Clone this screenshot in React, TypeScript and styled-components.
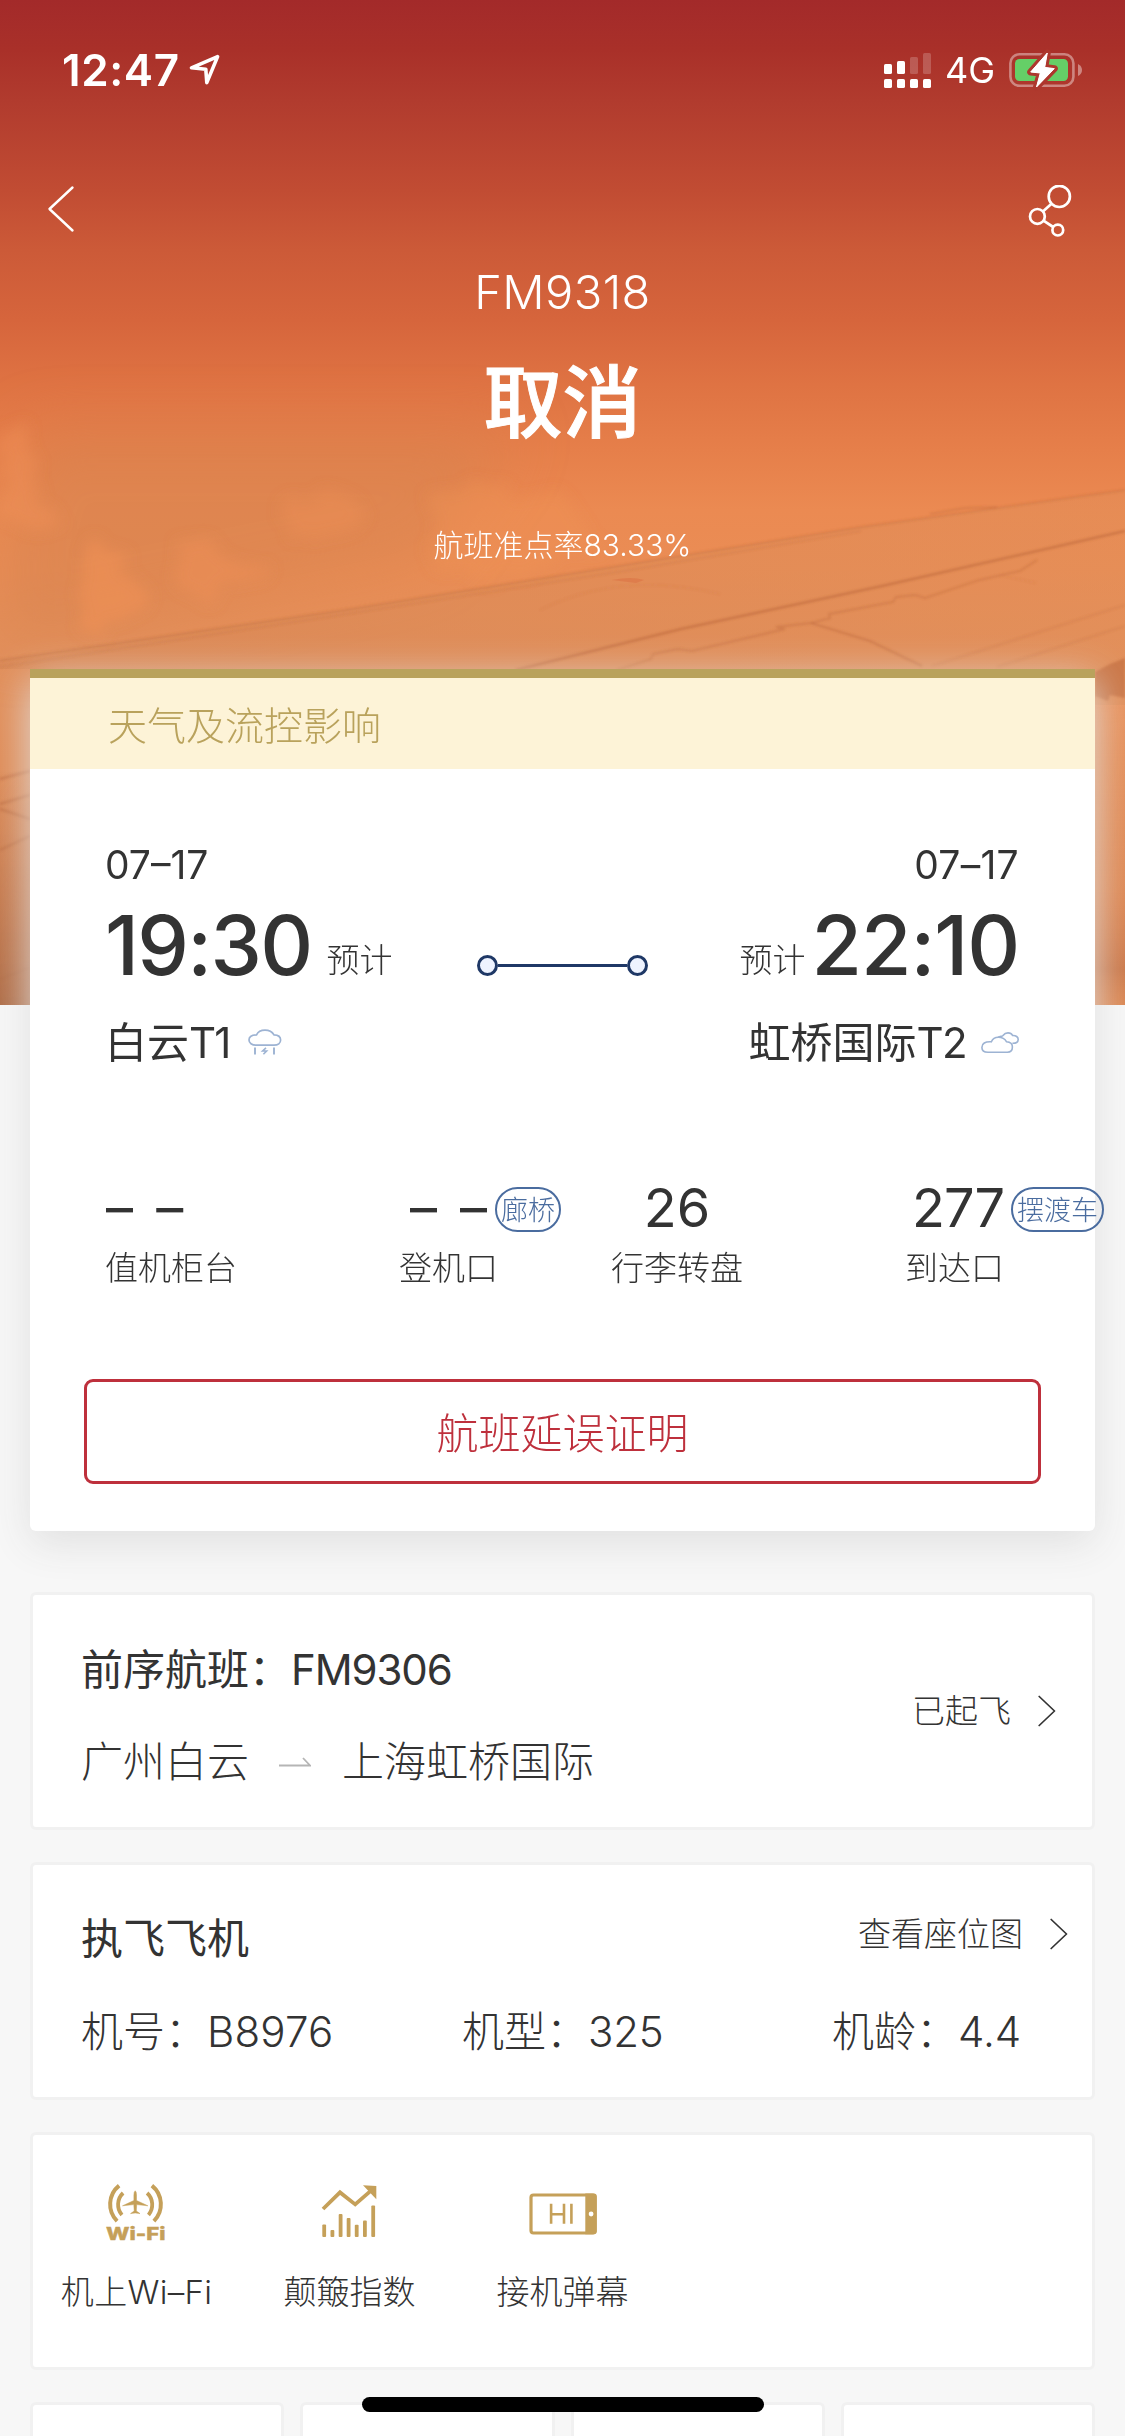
import React from "react";
import styled, { createGlobalStyle } from "styled-components";

const INK = "#333333";
const GOLD = "#c5a059";

const GlobalStyle = createGlobalStyle`
  * { box-sizing: border-box; }
  body {
    margin: 0;
    background: #f7f7f7;
    color: ${INK};
    font-family: Inter, "Noto Sans CJK SC", sans-serif;
  }
`;

const Page = styled.main`
  position: relative;
  width: 1125px;
  height: 2436px;
  overflow: hidden;
  background: #f7f7f7;
`;

const Text = styled.span<{ $size: number; $line?: number; $weight?: number; $spacing?: number; $color?: string }>`
  display: block;
  white-space: nowrap;
  font-size: ${(p) => p.$size}px;
  line-height: ${(p) => p.$line ?? 50}px;
  font-weight: ${(p) => p.$weight ?? 300};
  letter-spacing: ${(p) => p.$spacing ?? 0}px;
  color: ${(p) => p.$color ?? "inherit"};
`;

const Latin = styled.span<{ $spacing: number }>`
  letter-spacing: ${(p) => p.$spacing}px;
`;

/* ---------- hero ---------- */

const Hero = styled.header`
  position: relative;
  height: 1005px;
  color: #fff;
  background: linear-gradient(
    180deg,
    #a32a2a 0, #a93029 50px, #b13b2e 100px, #c14c33 190px, #cc5a38 250px,
    #d6653c 320px, #df7343 385px, #e67f4a 450px, #eb8a52 510px, #ea8d55 570px,
    #e2905c 660px, #df8c57 760px, #db8350 1005px
  );
`;

const HeroArt = styled.svg`
  position: absolute;
  inset: 0;
  width: 1125px;
  height: 1005px;
`;

const HeroContent = styled.div`
  position: relative;
  display: flex;
  flex-direction: column;
`;

const StatusBar = styled.div`
  display: flex;
  align-items: center;
  justify-content: space-between;
  height: 140px;
  padding: 0 41px 0 62px;
`;

const StatusGroup = styled.div<{ $gap: number }>`
  display: flex;
  align-items: center;
  gap: ${(p) => p.$gap}px;
`;

const NavBar = styled.nav`
  display: flex;
  align-items: flex-start;
  justify-content: space-between;
  height: 121px;
  padding: 45px 52px 0 47px;
`;

const FlightHeading = styled.div`
  display: flex;
  flex-direction: column;
  align-items: center;
  padding-top: 1px;
`;

const Headline = styled.h1`
  margin: 31px 0 72px;
  font-size: 79px;
  font-weight: 500;
  line-height: 100px;
  -webkit-text-stroke: 1px #fff;
`;

/* ---------- main card ---------- */

const DetailCard = styled.section`
  position: relative;
  width: 1065px;
  height: 862px;
  margin: -336px 30px 0;
  background: #fff;
  border-top: 9px solid #b9a25c;
  border-radius: 0 0 6px 6px;
  box-shadow: 0 12px 42px #e0e0e0;
`;

const Notice = styled.div`
  display: flex;
  align-items: center;
  height: 91px;
  padding: 4px 78px 0;
  background: #fdf3d7;
`;

const Route = styled.div`
  display: flex;
  justify-content: space-between;
  padding: 71px 76px 0 75px;
`;

const Endpoint = styled.div<{ $end?: boolean }>`
  display: flex;
  flex-direction: column;
  align-items: ${(p) => (p.$end ? "flex-end" : "flex-start")};
  width: 300px;
`;

const TimeRow = styled.div<{ $gap: number }>`
  display: flex;
  align-items: flex-start;
  gap: ${(p) => p.$gap}px;
  height: 90px;
  margin: 11px 0 27px;
`;

const Estimate = styled(Text)`
  padding-top: 34px;
`;

const AirportRow = styled.div<{ $gap: number }>`
  display: flex;
  align-items: center;
  gap: ${(p) => p.$gap}px;
`;

const Track = styled.div`
  display: flex;
  align-items: center;
  align-self: flex-start;
  width: 171px;
  margin-top: 115px;
`;

const Stop = styled.i`
  width: 21px;
  height: 21px;
  border: 3px solid #1f3866;
  border-radius: 50%;
  background: #eef3ff;
`;

const Rail = styled.i`
  flex: 1;
  height: 3px;
  background: #1f3866;
`;

const Stats = styled.div`
  display: grid;
  grid-template-columns: 294px 212px 294px 1fr;
  margin-top: 110px;
  padding-left: 75px;
`;

const Stat = styled.div<{ $align?: string }>`
  display: flex;
  flex-direction: column;
  align-items: ${(p) => p.$align ?? "center"};
  justify-self: start;
  gap: 8px;
`;

const StatValue = styled.div<{ $shift?: number }>`
  position: relative;
  height: 60px;
  margin-left: ${(p) => p.$shift ?? 0}px;
  word-spacing: 8px;
`;

const Badge = styled.span<{ $gap: number }>`
  position: absolute;
  left: calc(100% + ${(p) => p.$gap}px);
  top: 9px;
  height: 45px;
  padding: 0 4px;
  border: 2px solid #4a6c9f;
  border-radius: 23px;
  color: #4a6c9f;
  font-size: 27px;
  font-weight: 300;
  line-height: 43px;
  white-space: nowrap;
`;

const ProofButton = styled.button`
  display: block;
  width: 957px;
  height: 105px;
  margin: 89px auto 0;
  padding: 4px 0 0;
  border: 3px solid #be303c;
  border-radius: 9px;
  background: #fff;
  color: #be303c;
  font: 300 42px/95px Inter, "Noto Sans CJK SC", sans-serif;
`;

/* ---------- lower panels ---------- */

const Panels = styled.div`
  display: flex;
  flex-direction: column;
  gap: 32px;
  margin: 61px 30px 0;
`;

const Panel = styled.section`
  height: 238px;
  background: #fff;
  border: 3px solid #f1f1f1;
  border-radius: 6px;
`;

const PreviousFlight = styled(Panel)`
  display: flex;
  align-items: center;
  justify-content: space-between;
  padding: 0 36px 0 48px;
`;

const Stack = styled.div`
  display: flex;
  flex-direction: column;
  gap: 42px;
  padding-top: 9px;
`;

const Legs = styled.div`
  display: flex;
  align-items: center;
`;

const LegArrow = styled.svg`
  width: 32px;
  height: 10px;
  margin: 0 31px 0 30px;
`;

const MoreLink = styled.div<{ $top?: number }>`
  display: flex;
  align-items: center;
  gap: 27px;
  margin-top: ${(p) => p.$top ?? 0}px;
`;

const Aircraft = styled(Panel)`
  display: flex;
  flex-direction: column;
  padding: 49px 24px 0 48px;
`;

const AircraftHead = styled.div`
  display: flex;
  justify-content: space-between;
  align-items: flex-start;
  height: 93px;
`;

const AircraftFacts = styled.div`
  display: grid;
  grid-template-columns: 381px 370px 1fr;
`;

const Services = styled(Panel)`
  display: grid;
  grid-template-columns: 207px 219px 207px;
`;

const Service = styled.div`
  display: flex;
  flex-direction: column;
  align-items: center;
  padding-top: 44px;
  gap: 24px;

  svg { display: block; width: 76px; height: 64px; }
`;

const TileRow = styled.div`
  display: grid;
  grid-template-columns: repeat(4, 1fr);
  gap: 16px;
`;

const HomeIndicator = styled.div`
  position: absolute;
  left: 362px;
  bottom: 24px;
  width: 402px;
  height: 15px;
  border-radius: 8px;
  background: #000;
`;

/* ---------- drawings ---------- */

const WingScene = () => (
  <HeroArt viewBox="0 0 1125 1005">
    <defs>
      <filter id="cloud" x="-30%" y="-30%" width="160%" height="160%">
        <feTurbulence type="fractalNoise" baseFrequency="0.022 0.03" numOctaves="3" seed="8" />
        <feDisplacementMap in="SourceGraphic" scale="40" xChannelSelector="R" yChannelSelector="G" />
        <feGaussianBlur stdDeviation="7" />
      </filter>
      <filter id="haze" x="-30%" y="-30%" width="160%" height="160%">
        <feGaussianBlur stdDeviation="30" />
      </filter>
      <filter id="thin">
        <feGaussianBlur stdDeviation="0.9" />
      </filter>
      <linearGradient id="leftEdge" x1="0" y1="0" x2="0" y2="1">
        <stop offset="0" stopColor="#b06c45" stopOpacity="0" />
        <stop offset="1" stopColor="#ab6943" stopOpacity="0.95" />
      </linearGradient>
      <linearGradient id="rightEdge" x1="0" y1="0" x2="0" y2="1">
        <stop offset="0" stopColor="#ee955f" stopOpacity="0.5" />
        <stop offset="0.6" stopColor="#e08a55" stopOpacity="0.3" />
        <stop offset="0.88" stopColor="#b8683d" stopOpacity="0.5" />
        <stop offset="1" stopColor="#d98850" stopOpacity="0.4" />
      </linearGradient>
      <linearGradient id="wing" x1="0" y1="0" x2="1" y2="0">
        <stop offset="0" stopColor="#d88755" stopOpacity="0.7" />
        <stop offset="1" stopColor="#e08f5a" stopOpacity="0.4" />
      </linearGradient>
    </defs>
    <path d="M30 430 H520 L430 560 L0 650 V540Z" fill="#d4824f" opacity="0.5" filter="url(#haze)" />
    <path d="M0 660 L344 610 L624 565 L861 527 L1125 490 V669 H0Z" fill="url(#wing)" />
    <g filter="url(#cloud)" fill="#f09156">
      <path d="M0 430 L28 430 L36 490 L56 530 L26 530 L0 515Z" opacity="0.45" />
      <path d="M78 550 L98 536 L116 550 L130 576 L149 602 L138 618 L112 618 L96 640 L78 612Z" opacity="0.6" />
      <path d="M174 550 L204 540 L232 555 L272 566 L256 583 L220 580 L202 604 L182 582Z" opacity="0.45" />
      <path d="M288 497 L334 489 L362 507 L352 530 L322 537 L294 550 L280 525Z" opacity="0.38" />
      <path d="M432 495 L470 487 L560 492 L600 550 L500 580 L430 565Z" opacity="0.35" />
    </g>
    <g fill="none" stroke="#b76238" filter="url(#thin)">
      <path d="M0 660 L344 610 L624 565 L861 527 L1125 490" strokeWidth="2" opacity="0.3" />
      <path d="M0 667 L340 615 L624 571 L861 531" strokeWidth="1.5" opacity="0.22" />
      <path d="M930 514 L965 508 L997 507" strokeWidth="2" opacity="0.3" />
      <path d="M516 670 L681 629 L882 586 L1125 531" strokeWidth="2.4" opacity="0.5" />
      <path d="M617 670 L651 659 L653 654 L678 649 L692 651 L785 629 L776 627 L811 623 L830 618 L829 614 L893 602 L896 597 L915 595 L925 598 L979 580 L1020 571 L1037 560" strokeWidth="1.8" opacity="0.34" />
      <path d="M811 623 L870 641 L922 666" strokeWidth="2" opacity="0.4" />
      <path d="M932 666 L1125 605 M997 667 L1125 626" strokeWidth="1.6" opacity="0.22" />
      <path d="M1000 575 L1036 583 M540 610 Q620 570 720 594" strokeWidth="1.4" opacity="0.1" />
      <path d="M0 779 L30 771 M0 804 L30 795 M0 809 L30 819 M0 850 L30 836 M0 979 L30 968" strokeWidth="3" opacity="0.45" />
    </g>
    <path d="M612 580 q20 -4 32 0 l-8 3z" fill="#d9673b" opacity="0.4" />
    <path d="M1095 672 L1110 664 L1125 658 V698 L1110 695 L1108 701 L1095 696Z" fill="#bd683b" opacity="0.6" filter="url(#thin)" />
    <rect x="0" y="770" width="32" height="235" fill="url(#leftEdge)" />
    <rect x="1093" y="705" width="32" height="300" fill="url(#rightEdge)" />
  </HeroArt>
);

const LocationArrow = () => (
  <svg width="32" height="32" viewBox="188 53 32 32" fill="none" stroke="#fff" strokeWidth="3.6" strokeLinejoin="round">
    <path d="M217.6 55.6 L191.5 66.8 L205.8 68.2 L206.8 81.6Z" />
  </svg>
);

const Signal = () => (
  <svg width="47" height="35" viewBox="0 0 47 35" fill="#fff">
    {[0, 13, 26, 39].map((x) => (
      <rect key={x} x={x} y="26" width="8" height="9" rx="1.6" />
    ))}
    <rect x="0" y="11" width="8" height="10" rx="1.6" />
    <rect x="13" y="8" width="8" height="13" rx="1.6" />
    <rect x="26" y="4" width="8" height="17" rx="1.6" opacity="0.2" />
    <rect x="39" y="0" width="8" height="21" rx="1.6" opacity="0.2" />
  </svg>
);

const Battery = () => (
  <svg width="75" height="42" viewBox="0 0 75 42">
    <rect x="1.4" y="5.3" width="63" height="31.4" rx="9" fill="none" stroke="#fff" strokeOpacity="0.4" strokeWidth="2.6" />
    <path d="M69 15 q4 2 4 6 t-4 6z" fill="#fff" opacity="0.4" />
    <rect x="6" y="10" width="53" height="22" rx="4.5" fill="#65cf67" />
    <path
      d="M38.3 4 L21.7 23 L31.3 24 L27.5 38 L45.3 19.6 L35.7 18.4Z"
      fill="#fff"
      stroke="#ad372d"
      strokeWidth="7"
      strokeLinejoin="round"
      paintOrder="stroke"
    />
    <path d="M38.3 4 L21.7 23 L31.3 24 L27.5 38 L45.3 19.6 L35.7 18.4Z" fill="#fff" stroke="#fff" strokeLinejoin="round" />
  </svg>
);

const BackIcon = () => (
  <svg width="28" height="48" viewBox="0 0 28 48" fill="none" stroke="#fff" strokeWidth="2.4" strokeLinecap="round" strokeLinejoin="round">
    <path d="M25.5 2.5 L2.5 24 L25.5 45.5" />
  </svg>
);

const ShareIcon = () => (
  <svg width="45" height="54" viewBox="1028 185 45 54" fill="none" stroke="#fff" strokeWidth="2.7">
    <circle cx="1059.3" cy="196.4" r="10.6" />
    <circle cx="1037.4" cy="216.4" r="7.4" />
    <circle cx="1057.8" cy="230.1" r="5.4" />
    <path d="M1051.5 203.8 L1043.2 211.3 M1043.5 220.6 L1053.2 227" />
  </svg>
);

const StormIcon = () => (
  <svg width="34" height="28" viewBox="0 0 34 28" fill="none" stroke="#9db3d3" strokeWidth="1.7">
    <path d="M8 16.2 H26 C30 16.2 32.6 14 32.6 11 C32.6 7.8 30 6 26 5.9 C24.6 3.6 21.8 1.2 17 1.2 C12.2 1.2 9.6 3.6 8.5 5.9 C4 6 1 7.8 1 11 C1 14 4 16.2 8 16.2Z" />
    <path d="M7 18.5 V25.5 M26 18.5 V25.5" strokeWidth="1.9" />
    <path d="M18 18.8 L14.6 22 H18.6 L15.4 25.2" strokeWidth="1.6" />
  </svg>
);

const CloudyIcon = () => (
  <svg width="38" height="22" viewBox="0 0 38 22" fill="none" stroke="#9db3d3" strokeWidth="1.6">
    <path d="M17 5.2 C20 4 21 4.6 22 3.4 C23.4 1.6 25 .9 27 .9 C29.4 .9 30.8 1.9 31.6 3.5 C35 3.3 37.2 5 37.2 7.6 C37.2 10.2 35 11.4 31.4 11.3" />
    <path d="M7 20.2 H26.4 C29.8 20.2 31.4 18 31.4 15 C31.4 12 29 10 25.6 9.8 C24 7 20.8 5.3 17.3 5.3 C13.4 5.3 11.4 7.4 10.4 9.8 C4 9.4 .9 11.6 .9 15.4 C.9 18.6 3.2 20.2 7 20.2Z" />
  </svg>
);

const Chevron = () => (
  <svg width="18" height="32" viewBox="0 0 18 32" fill="none" stroke={INK} strokeWidth="1.7" strokeLinecap="round" strokeLinejoin="round">
    <path d="M1.2 1.5 L16.5 16 L1.2 30.5" />
  </svg>
);

/* The service drawings share a 76×64 box so that their labels line up. */
const WifiPlaneIcon = () => (
  <svg viewBox="99.5 2180 76 64" fill="none" stroke={GOLD} strokeWidth="4">
    <path d="M119.6 2186.6 A24 24 0 0 0 117.6 2222.2 M152.4 2186.6 A24 24 0 0 1 154.4 2222.2" />
    <path d="M123.6 2194 A16 16 0 0 0 122.4 2216 M147.6 2194 A16 16 0 0 1 149 2216" strokeWidth="3.8" />
    <path
      d="M135.7 2191.8 Q137 2192.5 137 2196 V2201.5 L148.4 2206.8 L137.2 2205.6 L136.8 2212 L140.5 2214.6 L135.7 2214 L131 2214.6 L134.7 2212 L134.3 2205.6 L123 2206.8 L134.4 2201.5 V2196 Q134.4 2192.5 135.7 2191.8Z"
      fill={GOLD}
      stroke={GOLD}
      strokeWidth="0.5"
    />
    <text x="106.5" y="2240.6" textLength="59.5" lengthAdjust="spacingAndGlyphs" fontFamily="Inter" fontSize="17.5" fontWeight="800" fill={GOLD} stroke={GOLD} strokeWidth="0.4">
      Wi-Fi
    </text>
  </svg>
);

const TurbulenceIcon = () => (
  <svg viewBox="312 2180 76 64" fill={GOLD}>
    <path d="M323 2210 L340 2193.4 L355.2 2205.4 L371 2191.6" fill="none" stroke={GOLD} strokeWidth="3.8" />
    <path d="M363 2186.3 L376.3 2187 V2200.2Z" />
    <rect x="322.3" y="2225.5" width="3.8" height="12.5" rx="1" />
    <rect x="330.5" y="2231" width="3.8" height="7" rx="1" />
    <rect x="338.7" y="2215" width="3.8" height="23" rx="1" />
    <rect x="346.7" y="2219" width="3.8" height="19" rx="1" />
    <rect x="354.8" y="2225.7" width="3.8" height="12.3" rx="1" />
    <rect x="363" y="2221.6" width="3.8" height="16.4" rx="1" />
    <rect x="371.3" y="2206.6" width="3.8" height="31.4" rx="1" />
  </svg>
);

const DanmakuIcon = () => (
  <svg viewBox="525.2 2179.4 76 64" fill="none" stroke={GOLD}>
    <rect x="531.2" y="2195.4" width="64" height="38" rx="2.5" strokeWidth="3.2" />
    <path d="M585.5 2194 H594 Q597 2194 597 2197 V2231.6 Q597 2234.6 594 2234.6 H585.5Z" fill={GOLD} stroke="none" />
    <circle cx="591.3" cy="2214.4" r="2.4" fill="#fff" stroke="none" />
    <path d="M551.3 2204.2 V2224.2 M564.2 2204.2 V2224.2 M551.3 2214.6 H564.2 M571.6 2204.2 V2224.2" strokeWidth="2.6" />
  </svg>
);

const services = [
  { label: "机上Wi–Fi", icon: <WifiPlaneIcon />, spacing: 0.3 },
  { label: "颠簸指数", icon: <TurbulenceIcon />, spacing: 0 },
  { label: "接机弹幕", icon: <DanmakuIcon />, spacing: 0 },
];

const stats = [
  { value: "– –", label: "值机柜台", align: "flex-start", shift: 1 },
  { value: "– –", label: "登机口", badge: "廊桥", badgeGap: 8 },
  { value: "26", label: "行李转盘" },
  { value: "277", label: "到达口", badge: "摆渡车", badgeGap: 7, spacing: -1, shift: 7 },
];

export default function App() {
  return (
    <Page>
      <GlobalStyle />
      <Hero>
        <WingScene />
        <HeroContent>
          <StatusBar>
            <StatusGroup $gap={8}>
              <Text $size={44} $weight={600} $spacing={0.6}>12:47</Text>
              <LocationArrow />
            </StatusGroup>
            <StatusGroup $gap={14}>
              <Signal />
              <Text $size={36} $weight={400}>4G</Text>
              <Battery />
            </StatusGroup>
          </StatusBar>
          <NavBar>
            <BackIcon />
            <ShareIcon />
          </NavBar>
          <FlightHeading>
            <Text $size={47} $line={60} $spacing={0.4}>FM9318</Text>
            <Headline>取消</Headline>
            <Text $size={30} $line={40}>航班准点率83.33%</Text>
          </FlightHeading>
        </HeroContent>
      </Hero>

      <DetailCard>
        <Notice>
          <Text $size={39} $color="#b9a25c">天气及流控影响</Text>
        </Notice>
        <Route>
          <Endpoint>
            <Text $size={39} $weight={400}>07–17</Text>
            <TimeRow $gap={15}>
              <Text $size={82} $line={90} $weight={500} $spacing={-1.7}>19:30</Text>
              <Estimate $size={33}>预计</Estimate>
            </TimeRow>
            <AirportRow $gap={19}>
              <Text $size={42} $weight={400}>白云<Latin $spacing={-2}>T1</Latin></Text>
              <StormIcon />
            </AirportRow>
          </Endpoint>
          <Track>
            <Stop />
            <Rail />
            <Stop />
          </Track>
          <Endpoint $end>
            <Text $size={39} $weight={400} $spacing={0.3}>07–17</Text>
            <TimeRow $gap={6}>
              <Estimate $size={33}>预计</Estimate>
              <Text $size={82} $line={90} $weight={500} $spacing={-1.1}>22:10</Text>
            </TimeRow>
            <AirportRow $gap={15}>
              <Text $size={42} $weight={400}>虹桥国际<Latin $spacing={-1.6}>T2</Latin></Text>
              <CloudyIcon />
            </AirportRow>
          </Endpoint>
        </Route>
        <Stats>
          {stats.map((s) => (
            <Stat key={s.label} $align={s.align}>
              <StatValue $shift={s.shift}>
                <Text $size={54} $line={60} $weight={400} $spacing={s.spacing}>{s.value}</Text>
                {s.badge && <Badge $gap={s.badgeGap ?? 8}>{s.badge}</Badge>}
              </StatValue>
              <Text $size={33} $line={44}>{s.label}</Text>
            </Stat>
          ))}
        </Stats>
        <ProofButton>航班延误证明</ProofButton>
      </DetailCard>

      <Panels>
        <PreviousFlight>
          <Stack>
            <Text $size={42} $weight={400}>前序航班：<Latin $spacing={-1.1}>FM9306</Latin></Text>
            <Legs>
              <Text $size={42}>广州白云</Text>
              <LegArrow viewBox="0 0 32 10" fill="none" stroke="#b5b5b5" strokeWidth="1.8">
                <path d="M0 8.5 H31 L24 1" />
              </LegArrow>
              <Text $size={42}>上海虹桥国际</Text>
            </Legs>
          </Stack>
          <MoreLink>
            <Text $size={33}>已起飞</Text>
            <Chevron />
          </MoreLink>
        </PreviousFlight>

        <Aircraft>
          <AircraftHead>
            <Text $size={42} $weight={400}>执飞飞机</Text>
            <MoreLink $top={-5}>
              <Text $size={33}>查看座位图</Text>
              <Chevron />
            </MoreLink>
          </AircraftHead>
          <AircraftFacts>
            <Text $size={42}>机号：<Latin $spacing={0.2}>B8976</Latin></Text>
            <Text $size={42}>机型：<Latin $spacing={-0.3}>325</Latin></Text>
            <Text $size={42}>机龄：4.4</Text>
          </AircraftFacts>
        </Aircraft>

        <Services>
          {services.map((s) => (
            <Service key={s.label}>
              {s.icon}
              <Text $size={33} $spacing={s.spacing}>{s.label}</Text>
            </Service>
          ))}
        </Services>

        <TileRow>
          <Panel />
          <Panel />
          <Panel />
          <Panel />
        </TileRow>
      </Panels>
      <HomeIndicator />
    </Page>
  );
}
